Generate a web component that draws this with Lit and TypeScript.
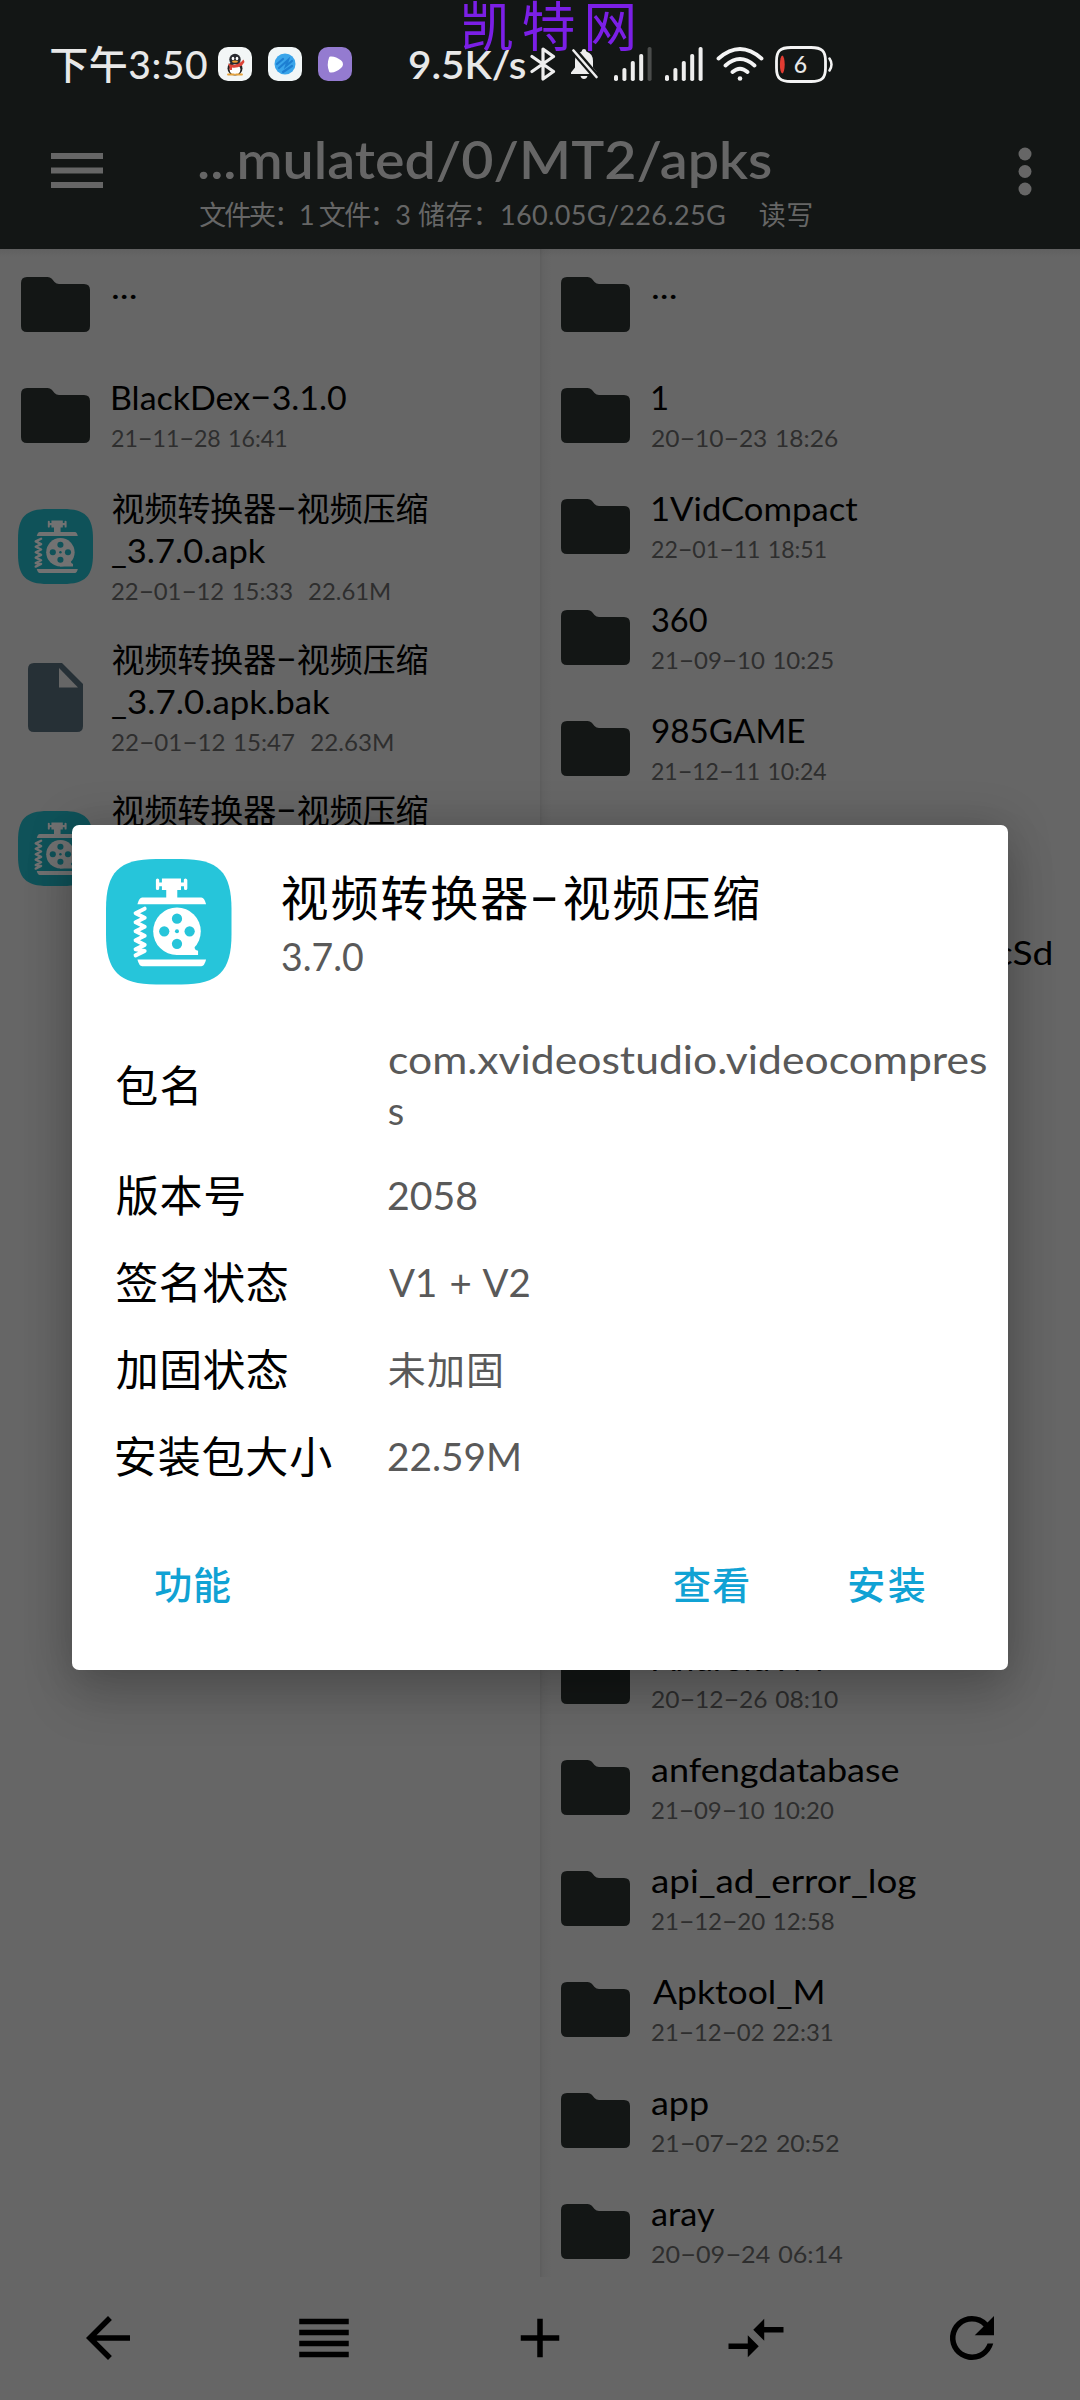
import { LitElement, html, css, svg, nothing } from "lit";
import { customElement, property } from "lit/decorators.js";

/**
 * One line of text whose visible width is brought to `w` pixels:
 * Latin lines are stretched, lines with Chinese characters are tracked out.
 */
@customElement("fit-text")
class FitText extends LitElement {
  @property() text = "";
  @property({ type: Number }) w = 0;

  static styles = css`
    :host { display: block; white-space: pre; }
    .line { display: inline-block; white-space: pre; transform-origin: left center; word-spacing: 0.06em; }
    .dash { display: inline-block; padding: 0 0.13em; transform: translateY(-0.05em) scaleX(1.85); }
  `;

  render() {
    const parts = this.text.split("-");
    return html`<span class="line">${parts.map((p, i) => html`${i ? html`<span class="dash">-</span>` : nothing}${p}`)}</span>`;
  }

  updated() {
    const line = this.renderRoot.querySelector(".line") as HTMLElement;
    const cs = getComputedStyle(this);
    const ctx = document.createElement("canvas").getContext("2d")!;
    // Measured at ten times the size, since glyph bounds come back as whole pixels.
    ctx.font = `${cs.fontWeight} ${parseFloat(cs.fontSize) * 10}px ${cs.fontFamily}`;
    const chars = [...this.text];
    const first = ctx.measureText(chars[0] ?? "");
    const last = ctx.measureText(chars[chars.length - 1] ?? "");
    let lead = -first.actualBoundingBoxLeft / 10;
    const trail = (last.width - last.actualBoundingBoxRight) / 10;
    line.style.letterSpacing = "0px";
    line.style.transform = "none";
    const ink = line.getBoundingClientRect().width - lead - trail;
    if (this.w && chars.length > 1) {
      if (/[\u3000-\uffff]/.test(this.text)) {
        line.style.letterSpacing = `${(this.w - ink) / (chars.length - 1)}px`;
      } else {
        const scale = this.w / ink;
        line.style.transform = `scaleX(${scale})`;
        lead *= scale;
      }
    }
    line.style.marginLeft = `${-lead}px`;
  }
}

const appIcon = (bg: string, fg: string) => html`
  <svg class="appicon" viewBox="0 0 125 125">
    <path fill=${bg} d="M50 0H75C112 0 125 13 125 50V75C125 112 112 125 75 125H50C13 125 0 112 0 75V50C0 13 13 0 50 0Z"/>
    <g fill=${fg}>
      <path d="M49.7 21q0-1.5 1.6-1.5t1.7 1.5v2.3h2.7v-4h19v4h2.8V21q0-1.5 1.6-1.5T81 21v8.5q0 1.500-1.700 1.500t-1.600-1.500v-2.300H74.700V31H71v8H60v-8h-4.300v-3.800H53v2.300Q53 31 51.300 31t-1.600-1.500z"/>
      <path d="M36 38.300H95q3 0 4.700 6.700H31.300Q33 38.300 36 38.300z"/>
      <path d="M31.300 100H99.700Q98 106.700 95 106.700H36Q33 106.700 31.300 100z"/>
      <circle cx="70.700" cy="72" r="23.700"/>
      <path d="M70 90.500l18-3.500q0 4 3.700 4.500v4.200H70z"/>
    </g>
    <g fill=${bg}>
      <circle cx="70.700" cy="59.500" r="5.100"/><circle cx="58" cy="72" r="5.100"/>
      <circle cx="83.300" cy="72" r="5.100"/><circle cx="70.700" cy="84.500" r="5.100"/><circle cx="70.700" cy="72" r="2"/>
    </g>
    <path fill="none" stroke=${fg} stroke-width="4" stroke-linejoin="round" stroke-linecap="round"
      d="M38.500 49.500L29.500 54L38.500 58.500L29.500 63L38.500 67.500L29.500 72L38.500 76.500L29.500 81L38.500 85.500L29.500 90L38.500 91.500L29.500 96"/>
  </svg>`;

const folderIcon = html`<svg class="folder" viewBox="0 0 69 55">
  <path fill="#131615" d="M6 0H26.500Q29 0 30.800 1.800L33.500 5Q35.300 7 38 7H63Q69 7 69 13V49Q69 55 63 55H6Q0 55 0 49V6Q0 0 6 0Z"/></svg>`;

const fileIcon = html`<svg class="file" viewBox="0 0 55 69">
  <path fill="#263036" d="M6 0H34L55 21V63Q55 69 49 69H6Q0 69 0 63V6Q0 0 6 0Z"/>
  <path fill="#666" d="M31 5V24.500H50Z"/></svg>`;

interface Entry {
  kind: "folder" | "apk" | "file" | "blank";
  lines?: [string, number][];
  date?: [string, number];
  tall?: boolean;
  tail?: boolean;
}

const title: [string, number] = ["视频转换器-视频压缩", 314.5];

const leftEntries: Entry[] = [
  { kind: "folder", lines: [["...", 23]] },
  { kind: "folder", lines: [["BlackDex-3.1.0", 233.5]], date: ["21-11-28 16:41", 174] },
  { kind: "apk", tall: true, lines: [title, ["_3.7.0.apk", 153.5]], date: ["22-01-12 15:33  22.61M", 277] },
  { kind: "file", tall: true, lines: [title, ["_3.7.0.apk.bak", 218]], date: ["22-01-12 15:47  22.63M", 280] },
  { kind: "apk", tall: true, lines: [title] },
];

const rightEntries: Entry[] = [
  { kind: "folder", lines: [["...", 23]] },
  { kind: "folder", lines: [["1", 0]], date: ["20-10-23 18:26", 185] },
  { kind: "folder", lines: [["1VidCompact", 205]], date: ["22-01-11 18:51", 173.5] },
  { kind: "folder", lines: [["360", 55]], date: ["21-09-10 10:25", 180.5] },
  { kind: "folder", lines: [["985GAME", 152]], date: ["21-12-11 10:24", 174] },
  { kind: "blank" },
  { kind: "blank", tall: true, tail: true, lines: [["cSd", 55]] },
  { kind: "blank" }, { kind: "blank" }, { kind: "blank" }, { kind: "blank" }, { kind: "blank" },
  { kind: "folder", lines: [["AndroidVM", 168]], date: ["20-12-26 08:10", 185.5] },
  { kind: "folder", lines: [["anfengdatabase", 246.5]], date: ["21-09-10 10:20", 181] },
  { kind: "folder", lines: [["api_ad_error_log", 263.5]], date: ["21-12-20 12:58", 181.5] },
  { kind: "folder", lines: [["Apktool_M", 169.5]], date: ["21-12-02 22:31", 180] },
  { kind: "folder", lines: [["app", 56]], date: ["21-07-22 20:52", 186] },
  { kind: "folder", lines: [["aray", 62.5]], date: ["20-09-24 06:14", 190] },
];

const details: { label: [string, number]; values: [string, number][] }[] = [
  { label: ["包名", 80], values: [["com.xvideostudio.videocompres", 597], ["s", 0]] },
  { label: ["版本号", 127], values: [["2058", 88]] },
  { label: ["签名状态", 171], values: [["V1 + V2", 140]] },
  { label: ["加固状态", 171], values: [["未加固", 112]] },
  { label: ["安装包大小", 215], values: [["22.59M", 130]] },
];

const navIcons = [
  "M20 11H7.830l5.590-5.590L12 4l-8 8 8 8 1.410-1.410L7.830 13H20z",
  "M3 15h18v-2H3zM3 19h18v-2H3zM3 11h18V9H3zM3 5v2h18V5z",
  "M19 13h-6v6h-2v-6H5v-2h6V5h2v6h6z",
  "M9.010 14H2v2h7.010v3L13 15l-3.990-4zM14.990 13v-3H22V8h-7.010V5L11 9z",
  "M17.650 6.350A7.960 7.960 0 0 0 12 4a8 8 0 1 0 7.730 10h-2.080A6 6 0 1 1 12 6c1.660 0 3.140.690 4.220 1.780L13 11h7V4z",
];

const bars = (dimLast: boolean) => html`<svg class="signal" viewBox="0 0 38 34">
  ${[0, 1, 2, 3, 4].map((i) => svg`<rect x=${i * 8.4} y=${28 - i * 7} width="4" height=${6 + i * 7} rx="1.800"
    fill=${dimLast && i === 4 ? "#4a4c4b" : "#eee"}/>`)}</svg>`;

@customElement("app-root")
class AppRoot extends LitElement {
  static styles = css`
    :host {
      display: block; position: relative; width: 1080px; height: 2400px; overflow: hidden;
      background: #666; font-family: Lato, "Noto Sans CJK SC", sans-serif; color: #000;
    }
    * { box-sizing: border-box; }
    svg { display: block; flex: none; }
    .screen { display: flex; flex-direction: column; height: 2400px; }
    .header { flex: none; height: 249px; background: #131615; color: #666; display: flex; flex-direction: column; }
    .status { height: 128px; display: flex; align-items: center; padding-left: 51px; color: #e8e8e8; font-size: 39px; line-height: 40px; font-weight: 500; }
    .clock { width: 166.500px; }
    .badges { display: flex; gap: 16px; width: 191.500px; }
    .badge { width: 34px; height: 34px; }
    .speed { width: 121px; font-weight: 600; }
    .bt { width: 26px; height: 34px; margin-right: 14px; }
    .bell { width: 28px; height: 32px; margin-right: 15.500px; }
    .signal { width: 38px; height: 34px; margin-right: 13px; }
    .wifi { width: 48px; height: 36px; margin-right: 11px; }
    .battery { position: relative; width: 58px; height: 37px; }
    .battery svg { width: 58px; height: 37px; }
    .level { position: absolute; left: 0; top: 0; width: 52px; height: 37px; display: grid; place-items: center; font-size: 23px; line-height: 37px; }
    .toolbar { flex: 1; display: flex; padding-left: 51px; }
    .burger { width: 52px; height: 36px; margin-top: 25px; }
    .path { flex: 1; margin-left: 97px; }
    .crumb { font-size: 51px; line-height: 60px; font-weight: 600; padding-top: 2px; }
    .stats { display: grid; grid-template-columns: 119.500px 99px 341px auto; font-size: 27px; line-height: 34px; padding-top: 7.500px; }
    .kebab { width: 14px; height: 50px; margin: 18px 48.500px 0 0; }
    .panels { flex: none; height: 2028px; display: grid; grid-template-columns: 540px 540px; overflow: hidden; }
    .panel { background: linear-gradient(#606060, #666 8px); }
    .panel.right { background: linear-gradient(90deg, rgba(0,0,0,.09), rgba(0,0,0,.03) 3px, transparent 12px), linear-gradient(#606060, #666 8px); }
    .row { display: flex; height: 111px; }
    .row.tall { height: 151px; }
    .thumb { width: 112.500px; display: flex; align-items: center; }
    .folder { width: 69px; height: 55px; margin-left: 21px; }
    .file { width: 55px; height: 69px; margin-left: 28px; }
    .thumb .appicon { width: 75px; height: 75px; margin-left: 18px; }
    .names { padding-top: 16px; }
    .tail .names { padding-left: 344px; }
    .name { font-size: 33px; line-height: 42px; }
    .date { font-size: 24px; line-height: 30px; margin-top: 5px; color: #2e2e2e; }
    .nav { flex: 1; display: grid; grid-template-columns: repeat(5, 1fr); place-items: center; padding-bottom: 1px; }
    .nav svg { width: 66px; height: 66px; }
    .dialog {
      position: absolute; left: 72px; top: 825px; width: 936px; height: 845px; background: #fff; border-radius: 7px;
      box-shadow: 0 28px 50px rgba(0,0,0,.17), 0 0 46px rgba(0,0,0,.18); display: flex; flex-direction: column;
    }
    .head { display: flex; height: 194px; padding: 34px 0 0 34px; }
    .head .appicon { width: 125.500px; height: 125.500px; }
    .heading { margin-left: 50.500px; }
    .app { font-size: 48px; line-height: 60px; margin-top: 9px; }
    .version { font-size: 38px; line-height: 46px; margin-top: 5px; color: #595959; }
    .detail { display: flex; align-items: center; height: 87px; padding-left: 44.500px; }
    .detail.two { height: 133px; }
    .label { width: 272.500px; font-size: 43px; line-height: 60px; }
    .value { font-size: 38px; line-height: 51px; color: #595959; }
    .two .value { padding-bottom: 1px; }
    .actions { flex: 1; display: flex; padding: 61px 83.500px 0 83.500px; font-size: 38px; line-height: 46px; font-weight: 500; color: #10a2d4; }
    .actions fit-text { width: 75px; }
    .spacer { flex: 1; }
    .gap { width: 101px; }
    .mark { position: absolute; left: 463px; top: 0; font-size: 54px; line-height: 54px; color: #7b1fe6; }
  `;

  private text([t, w]: [string, number], cls = "") {
    return html`<fit-text class=${cls} .text=${t} .w=${w}></fit-text>`;
  }

  private row(e: Entry) {
    const icon = e.kind === "folder" ? folderIcon : e.kind === "file" ? fileIcon : e.kind === "apk" ? appIcon("#0f5259", "#727272") : nothing;
    return html`<div class="row ${e.tall ? "tall" : ""} ${e.tail ? "tail" : ""}">
      <div class="thumb">${icon}</div>
      <div class="names">
        ${(e.lines ?? []).map((l) => this.text(l, "name"))}
        ${e.date ? this.text(e.date, "date") : nothing}
      </div>
    </div>`;
  }

  private status() {
    return html`<div class="status">
      ${this.text(["下午3:50", 156], "clock")}
      <div class="badges">
        <svg class="badge" viewBox="0 0 34 34"><rect width="34" height="34" rx="10" fill="#f3f6f6"/>
          <ellipse cx="17" cy="21.500" rx="7.500" ry="7" fill="#222"/><circle cx="17" cy="12.500" r="5.700" fill="#2a2a30"/>
          <ellipse cx="17" cy="22.500" rx="5.400" ry="5.300" fill="#fff"/>
          <ellipse cx="15" cy="11.500" rx="1.300" ry="1.800" fill="#fff"/><ellipse cx="19" cy="11.500" rx="1.300" ry="1.800" fill="#fff"/>
          <ellipse cx="17" cy="14.600" rx="3" ry="1.200" fill="#f0a030"/>
          <path d="M10 16.500Q17 20 23 15L25.500 12.500 26.500 15 24 18.500Q18 21.500 14 20.500V23H11.500V20Z" fill="#dc4438"/>
          <path d="M10 27.500h6M18 27.500h6" stroke="#e6a23a" stroke-width="1.800" stroke-linecap="round"/></svg>
        <svg class="badge" viewBox="0 0 34 34"><rect width="34" height="34" rx="10" fill="#f1f6f7"/>
          <circle cx="17" cy="17" r="10.500" fill="#3aa5ea"/>
          <path d="M9 17l6-5M11 21l9-8-2 6 6-5M15 25l9-6" stroke="#1d7fd2" stroke-width="2.200" fill="none" stroke-linecap="round"/></svg>
        <svg class="badge" viewBox="0 0 34 34"><rect width="34" height="34" rx="10" fill="#947bd0"/>
          <path d="M12.500 11Q17 10.500 22 14.500 25 17 22 20 17 24.500 12.500 24 10 17.500 12.500 11Z" fill="#fff" stroke="#fff" stroke-width="3" stroke-linejoin="round"/></svg>
      </div>
      ${this.text(["9.5K/s", 116], "speed")}
      <svg class="bt" viewBox="0 0 26 34"><path d="M2 9.500L23.500 24.500 13 32V2L23.500 9.500 2 24.500" fill="none" stroke="#eee" stroke-width="3.200" stroke-linejoin="round" stroke-linecap="round"/></svg>
      <svg class="bell" viewBox="0 0 28 32"><path d="M14 1q2 0 2.400 2.400Q23 5.500 23 13v6.500l4 5V26H1v-1.500l4-5V13Q5 5.500 11.600 3.400 12 1 14 1ZM10.500 28h7q-.8 3-3.500 3t-3.500-3z" fill="#eee"/>
        <path d="M2 .5L27.500 30" stroke="#131615" stroke-width="7"/><path d="M3.500 2.500L26.500 29" stroke="#eee" stroke-width="2.600" stroke-linecap="round"/></svg>
      ${bars(true)}${bars(false)}
      <svg class="wifi" viewBox="0 0 48 36"><g fill="none" stroke="#f4f4f4" stroke-width="3.800" stroke-linecap="round">
        <path d="M2.500 12.500Q24-6.500 45.500 12.500M9.500 19.500Q24 6.500 38.500 19.500M16.500 26Q24 19.500 31.500 26"/></g><circle cx="24" cy="32.500" r="2.300" fill="#f4f4f4"/></svg>
      <div class="battery">
        <svg viewBox="0 0 58 37"><path d="M16 1.500H36C47 1.500 50.500 5 50.500 15V22C50.500 32 47 35.500 36 35.500H16C5 35.500 1.500 32 1.500 22V15C1.500 5 5 1.500 16 1.500Z" fill="none" stroke="#f4f4f4" stroke-width="2.800"/>
          <ellipse cx="7.300" cy="18.500" rx="2.400" ry="9" fill="#e23c32"/><path d="M54.500 12.500Q58.500 18.500 54.500 24.500" fill="none" stroke="#f4f4f4" stroke-width="2.500" stroke-linecap="round"/></svg>
        <span class="level">6</span>
      </div>
    </div>`;
  }

  render() {
    return html`
      <div class="screen">
        <div class="header">
          ${this.status()}
          <div class="toolbar">
            <svg class="burger" viewBox="0 0 52 36"><path d="M0 0h52v6H0zM0 14.500h52v6H0zM0 29h52v6H0z" fill="#666"/></svg>
            <div class="path">
              ${this.text(["...mulated/0/MT2/apks", 571], "crumb")}
              <div class="stats">
                ${this.text(["文件夹：1", 113])}
                ${this.text(["文件：3", 90])}
                ${this.text(["储存：160.05G/226.25G", 306])}
                ${this.text(["读写", 52])}
              </div>
            </div>
            <svg class="kebab" viewBox="0 0 14 50"><g fill="#666"><circle cx="7" cy="8" r="6.500"/><circle cx="7" cy="25.500" r="6.500"/><circle cx="7" cy="43" r="6.500"/></g></svg>
          </div>
        </div>
        <div class="panels">
          <div class="panel">${leftEntries.map((e) => this.row(e))}</div>
          <div class="panel right">${rightEntries.map((e) => this.row(e))}</div>
        </div>
        <div class="nav">${navIcons.map((d) => html`<svg viewBox="0 0 24 24"><path d=${d}/></svg>`)}</div>
      </div>
      <div class="dialog">
        <div class="head">
          ${appIcon("#26c5da", "#fff")}
          <div class="heading">
            ${this.text(["视频转换器-视频压缩", 476], "app")}
            ${this.text(["3.7.0", 81], "version")}
          </div>
        </div>
        ${details.map((d) => html`<div class="detail ${d.values.length > 1 ? "two" : ""}">
          ${this.text(d.label, "label")}
          <div class="value">${d.values.map((v) => this.text(v))}</div>
        </div>`)}
        <div class="actions">
          ${this.text(["功能", 75])}
          <div class="spacer"></div>
          ${this.text(["查看", 75])}
          <div class="gap"></div>
          ${this.text(["安装", 75])}
        </div>
      </div>
      ${this.text(["凯特网", 170], "mark")}
    `;
  }
}
